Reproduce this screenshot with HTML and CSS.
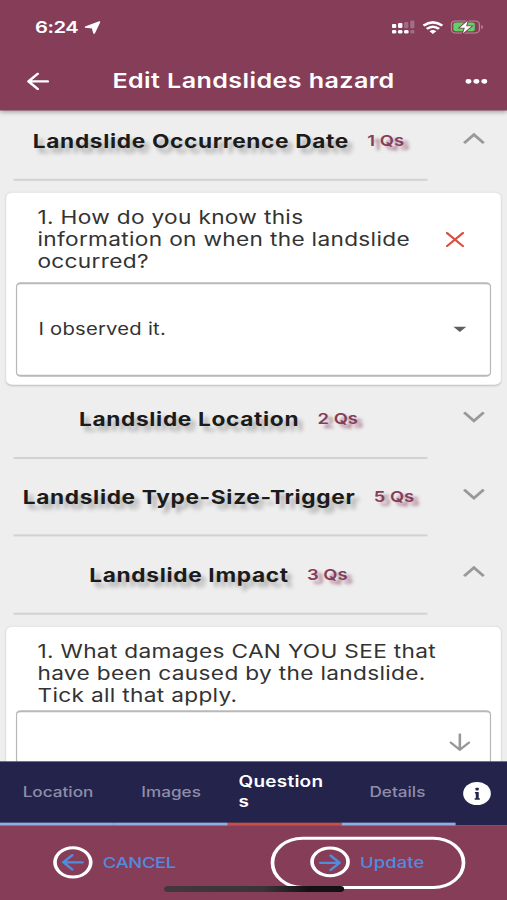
FILE: index.html
```html
<!DOCTYPE html>
<html lang="en">
<head>
<meta charset="utf-8">
<title>Edit Landslides hazard</title>
<link rel="stylesheet" href="styles.css">
</head>
<body>
<div class="screen">
  <header class="header">
    <div class="status">
      <span class="time">6:24</span>
      <svg class="loc" width="13" height="13" viewBox="0 0 13 13"><path d="M12.200.8 7.800 12 6.600 6.700.8 6Z" fill="#fff" stroke="#fff" stroke-width="1.400" stroke-linejoin="round"/></svg>
      <div class="status-icons">
        <svg width="19" height="14" viewBox="0 0 19 14"><g fill="#fff"><rect x="0" y="4" width="3.600" height="4" rx="1"/><rect x="5" y="3" width="3.600" height="5" rx="1"/><rect x="0" y="9.800" width="3.600" height="3.600" rx="1.200"/><rect x="5" y="9.800" width="3.600" height="3.600" rx="1.200"/><rect x="10" y="9.800" width="3.600" height="3.600" rx="1.200"/></g><g fill="#fff" opacity=".25"><rect x="10" y="1.800" width="3.400" height="6.400" rx="1"/><rect x="15" y="0.500" width="3.400" height="7.700" rx="1"/><rect x="15" y="9.800" width="3.400" height="3.600" rx="1"/></g></svg>
        <svg width="17" height="13" viewBox="0 0 17 13"><g fill="none" stroke="#fff" stroke-width="2.500"><path d="M.8 4.500Q8.500-2 16.200 4.500"/><path d="M3.500 7.800Q8.500 3.400 13.500 7.800"/></g><path d="M5.700 10Q8.500 7.700 11.300 10L8.500 12.900Z" fill="#fff"/></svg>
        <svg width="27" height="14" viewBox="0 0 27 14"><rect x=".5" y=".8" width="23" height="12" rx="3.500" fill="none" stroke="#b98a9d"/><path d="M25 5v4q1.400-.5 1.400-2T25 5Z" fill="#b98a9d"/><rect x="2.200" y="2.400" width="17.500" height="8.800" rx="2" fill="#62d267"/><path d="M13.800.8 7.400 7.600h4.200L10 13.200 17 6.200h-4.400Z" fill="#fff" stroke="#853d58" stroke-width="1.600" paint-order="stroke"/></svg>
      </div>
    </div>
    <div class="bar">
      <svg class="back" width="18" height="18" viewBox="0 0 18 18"><path d="M17 9H1.600M8.800 1.400 1.300 9l7.500 7.600" fill="none" stroke="#fff" stroke-width="2.200" stroke-linecap="round" stroke-linejoin="round"/></svg>
      <h1>Edit Landslides hazard</h1>
      <svg class="more" width="18" height="6" viewBox="0 0 18 6"><g fill="#fff"><circle cx="2.500" cy="3" r="2.400"/><circle cx="9" cy="3" r="2.400"/><circle cx="15.500" cy="3" r="2.400"/></g></svg>
    </div>
  </header>

  <main class="content">
    <section class="row first">
      <div class="label"><h2>Landslide Occurrence Date</h2><span class="count">1 Qs</span></div>
      <svg class="chev" viewBox="0 0 18 12"><path d="M1 10.500 9 2l8 8.500"/></svg>
    </section>
    <article class="card known">
      <div class="question">
        <p>1. How do you know this<br>information on when the landslide<br>occurred?</p>
        <svg class="cross" width="15" height="15" viewBox="0 0 15 15"><path d="m1 1 13 13M14 1 1 14" fill="none" stroke="#db4f41" stroke-width="2" stroke-linecap="round"/></svg>
      </div>
      <div class="select"><span>I observed it.</span><svg class="caret" width="11" height="6" viewBox="0 0 11 6"><path d="M0 0h11L5.500 5.600Z" fill="#5f5f5f"/></svg></div>
    </article>
    <section class="row second">
      <div class="label"><h2>Landslide Location</h2><span class="count">2 Qs</span></div>
      <svg class="chev" viewBox="0 0 18 12"><path d="m1 1.500 8 8.500 8-8.500"/></svg>
    </section>
    <section class="row">
      <div class="label"><h2>Landslide Type-Size-Trigger</h2><span class="count">5 Qs</span></div>
      <svg class="chev" viewBox="0 0 18 12"><path d="m1 1.500 8 8.500 8-8.500"/></svg>
    </section>
    <section class="row">
      <div class="label"><h2>Landslide Impact</h2><span class="count">3 Qs</span></div>
      <svg class="chev" viewBox="0 0 18 12"><path d="M1 10.500 9 2l8 8.500"/></svg>
    </section>
    <article class="card damage">
      <div class="question">
        <p>1. What damages CAN YOU SEE that<br>have been caused by the landslide.<br>Tick all that apply.</p>
      </div>
      <div class="select"><span></span><svg class="down" width="17" height="18" viewBox="0 0 17 18"><path d="M8.500 1v15.500M1 9.200l7.500 7.300L16 9.200" fill="none" stroke="#989898" stroke-width="2.100" stroke-linecap="round"/></svg></div>
    </article>
  </main>

  <nav class="tabs">
    <a class="tab location">Location</a>
    <a class="tab images">Images</a>
    <a class="tab active">Question<br>s</a>
    <a class="tab details">Details</a>
    <svg class="info" width="23" height="24" viewBox="0 0 23 24"><ellipse cx="11.500" cy="12" rx="11.300" ry="11.500" fill="#fff"/><g fill="#24234b"><rect x="10.300" y="6.200" width="2.600" height="2.700" rx=".6"/><path d="M9.800 10.400h3.100v6.200h.9v1.500H9.600v-1.500h.9v-4.700h-.7Z"/></g></svg>
  </nav>

  <footer class="actions">
    <button class="cancel">
      <svg width="33" height="33" viewBox="0 0 33 33"><circle cx="16.500" cy="16.500" r="14.600" fill="none" stroke="#fff" stroke-width="3"/><path d="M24.500 16.500H9M16 9.300 8.800 16.500l7.200 7.200" fill="none" stroke="#508ce0" stroke-width="2.200" stroke-linecap="round"/></svg>
      <span>CANCEL</span>
    </button>
    <button class="update">
      <svg width="33" height="33" viewBox="0 0 33 33"><ellipse cx="16.500" cy="16" rx="14.700" ry="13.800" fill="none" stroke="#fff" stroke-width="3"/><path d="M8.500 17H24M17 9.800l7.200 7.200-7.200 7.200" fill="none" stroke="#508ce0" stroke-width="2.200" stroke-linecap="round"/></svg>
      <span>Update</span>
    </button>
    <div class="home"></div>
  </footer>
</div>
</body>
</html>
```
FILE: styles.css
```css
* { box-sizing: border-box; }
html, body { margin: 0; width: 507px; height: 900px; overflow: hidden; background: #eeeeee; }
h1, h2, p { margin: 0; }

/* 414x896 phone viewport fitted to the window */
.screen {
  width: 414px;
  height: 896px;
  transform: scale(1.22464, 1.00446);
  transform-origin: 0 0;
  display: flex;
  flex-direction: column;
  overflow: hidden;
  background: #eeeeee;
  font-family: Inter, "Liberation Sans", sans-serif;
  color: #333;
}

.header {
  flex: none;
  height: 110px;
  background: #853d58;
  color: #fff;
  box-shadow: 0 2px 4px rgba(0, 0, 0, .35);
  z-index: 2;
}
.status { display: flex; align-items: center; height: 54px; padding: 0 19px 0 28.500px; }
.time { font-size: 16.500px; font-weight: 600; letter-spacing: -.35px; }
.loc { margin-left: 5.500px; }
.status-icons { display: flex; align-items: center; gap: 6px; margin-left: auto; }
.bar { display: flex; align-items: center; height: 53px; padding: 0 16.500px 0 21.500px; }
.bar h1 { flex: 1; margin-right: 5px; text-align: center; font-size: 20.500px; font-weight: 600; letter-spacing: .33px; white-space: nowrap; }

.content { flex: 1; min-height: 0; overflow: hidden; }
.row { display: flex; justify-content: space-between; align-items: flex-end; height: 77.450px; padding: 0 18px 0 11.400px; }
.row.first { height: 70px; }
.row.second { height: 74px; }
.label {
  display: flex;
  justify-content: center;
  align-items: center;
  width: 338px;
  padding-bottom: 25.800px;
  border-bottom: 2px solid #d2d2d2;
  line-height: 24px;
  white-space: nowrap;
}
.label h2 { font-size: 18.500px; font-weight: 700; letter-spacing: .54px; color: #1b1b1b; text-shadow: 4px 5px 4px rgba(0, 0, 0, .28); }
.count { margin-left: 15px; margin-right: 4px; font-size: 15px; font-weight: 600; color: #853d58; text-shadow: 4.500px 4px 3px rgba(133, 61, 88, .6); }
.chev { width: 18px; height: 12px; margin-bottom: 36.500px; fill: none; stroke: #999; stroke-width: 2.500px; }

.card { margin: 12px 4.600px 0 5.400px; padding: 12.500px 8px 0; border-radius: 5px; background: #fff; box-shadow: 0 1px 2px rgba(0, 0, 0, .2); }
.known { height: 191px; }
.damage { height: 191px; }
.question { display: flex; align-items: center; justify-content: space-between; height: 67.500px; padding: 0 22px 0 17.200px; }
.question p { font-size: 18.500px; line-height: 22.400px; letter-spacing: .26px; white-space: nowrap; }
.select { display: flex; align-items: center; justify-content: space-between; height: 94px; margin-top: 8.500px; padding: 0 19px 0 17px; border: 1.500px solid #b8b8b8; border-width: 2px 1.500px; border-radius: 4px; font-size: 16.500px; letter-spacing: .2px; }
.damage .select { margin-top: 3.500px; padding: 0 16px; align-items: flex-start; }
.down { margin-top: 21px; }

.tabs { flex: none; display: flex; height: 64px; background: #24234b; color: #8f8ea8; }
.tab {
  display: flex;
  align-items: center;
  width: 92.900px;
  padding-bottom: 1.500px;
  border-bottom: 3px solid #8eaede;
  font-size: 14px;
  font-weight: 500;
  letter-spacing: 0;
  line-height: 19px;
}
.location { padding-left: 18.500px; }
.images { padding-left: 22.500px; }
.details { padding-left: 23px; }
.active { padding-left: 9px; border-color: #c4504c; color: #fff; font-size: 15.500px; font-weight: 600; letter-spacing: .2px; }
.info { margin: 20px 0 0 6.800px; }

.actions { position: relative; flex: none; display: flex; height: 74px; background: #853d58; }
.actions button { display: flex; align-items: center; margin: 0; background: none; color: #508ce0; font: 500 15px Inter, sans-serif; }
.actions svg { flex: none; }
.cancel { width: 221px; height: 74px; padding: 0 0 1px 43px; border: 0; }
.cancel span { margin-left: 8px; letter-spacing: -.25px; }
.update { width: 159px; height: 52px; margin-top: 10.500px !important; padding: 0 0 0 29px; border: 3px solid #fff; border-radius: 26px; }
.update span { margin-left: 8px; letter-spacing: .1px; }
.home { position: absolute; left: 134px; bottom: 8.500px; width: 147px; height: 5.500px; border-radius: 3px; background: linear-gradient(90deg, #42373d, #3a3438 55%, #151113 80%); }
```
